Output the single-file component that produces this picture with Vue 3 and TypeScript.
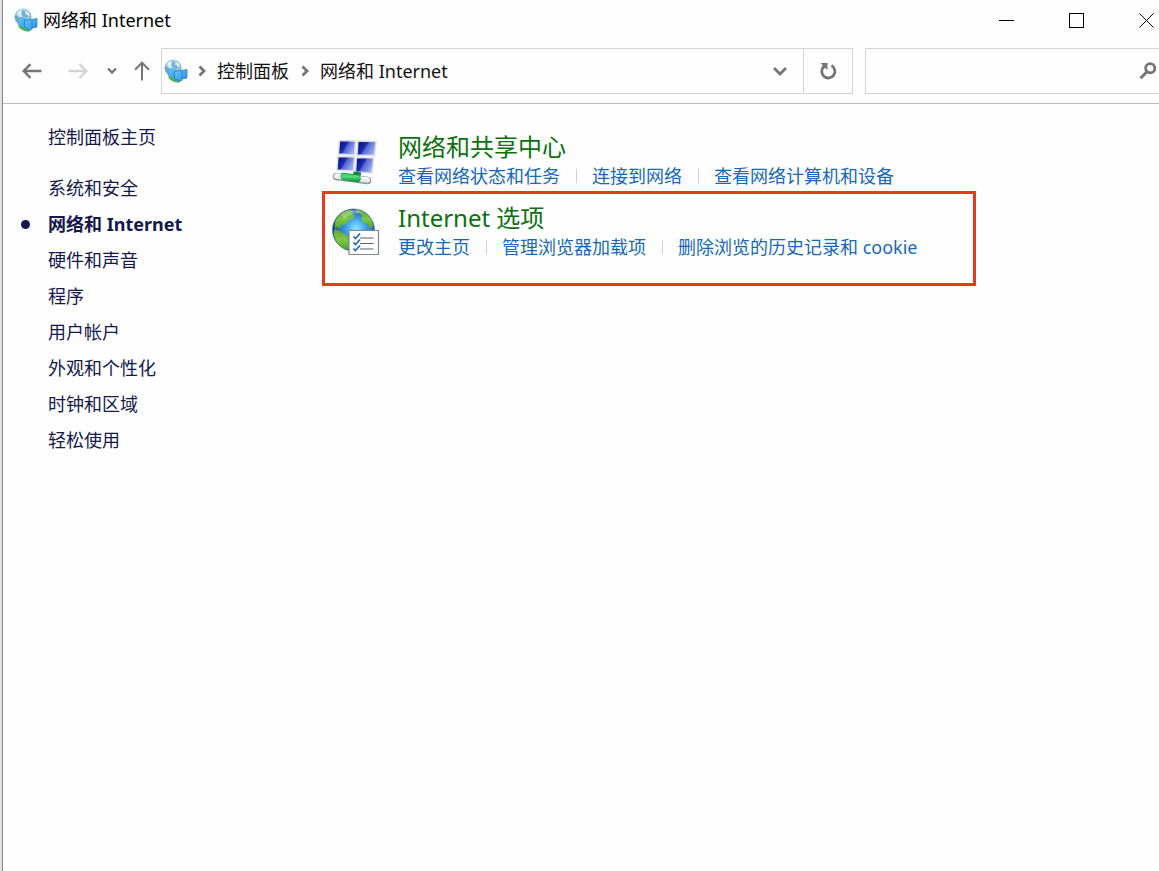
<script setup lang="ts">
import { ref } from 'vue'

interface Category {
  id: string
  title: string
  icon: 'sharing' | 'internet'
  tasks: string[]
  highlighted: boolean
}

const query = ref('')
const current = '网络和 Internet'
const crumbs: string[] = ['控制面板', current]
const sections: string[] = [
  '系统和安全',
  current,
  '硬件和声音',
  '程序',
  '用户帐户',
  '外观和个性化',
  '时钟和区域',
  '轻松使用',
]
const categories: Category[] = [
  {
    id: 'sharing',
    title: '网络和共享中心',
    icon: 'sharing',
    tasks: ['查看网络状态和任务', '连接到网络', '查看网络计算机和设备'],
    highlighted: false,
  },
  {
    id: 'internet',
    title: 'Internet 选项',
    icon: 'internet',
    tasks: ['更改主页', '管理浏览器加载项', '删除浏览的历史记录和 cookie'],
    highlighted: true,
  },
]
</script>

<template>
  <div class="desktop">
    <div class="window">
      <svg class="defs" width="0" height="0" aria-hidden="true">
        <defs>
          <radialGradient id="paleGlobe" cx="45%" cy="35%" r="65%">
            <stop offset="0" stop-color="#e6f5fa" />
            <stop offset="0.6" stop-color="#9ccbe0" />
            <stop offset="1" stop-color="#5d9dc0" />
          </radialGradient>
          <linearGradient id="paleScreen" x1="0" y1="0" x2="1" y2="1">
            <stop offset="0" stop-color="#6cc8f8" />
            <stop offset="1" stop-color="#1f8fe4" />
          </linearGradient>
          <symbol id="netIcon" viewBox="0 0 24 24">
            <circle cx="9" cy="9" r="8.500" fill="url(#paleGlobe)" />
            <path d="M8 2l3 1v3l3 1-1 3-4-1-2-3zM1 7l3 1 1 4-2 2C1 12 .500 9 1 7z" fill="#5ba6cb" opacity=".8" />
            <path d="M4 4l3-2 .500 3L5 8zM12 3l3 2 1 3-3-1z" fill="#f3fbfd" opacity=".8" />
            <path d="M4.500 17l9 3.500 3 .500-1 2.500c-4 .500-9-2-11-4.500z" fill="#4fb356" />
            <path d="M4.500 10l4-.500 6 3v8.500l-10-4z" fill="url(#paleScreen)" stroke="#3e97cf" stroke-width=".6" />
            <path d="M10.500 12.500l12.500-2v8.500l-5 1v1.500l-4 1v-2l-3.500-1z" fill="url(#paleScreen)" stroke="#2678b5" stroke-width=".7" />
            <path d="M18 11.500V20" stroke="#2678b5" stroke-width=".7" />
          </symbol>
        </defs>
      </svg>

      <header class="titlebar">
        <svg class="app-icon" aria-hidden="true"><use href="#netIcon" /></svg>
        <h1 class="title">{{ current }}</h1>
        <div class="captions">
          <button type="button" class="caption" aria-label="最小化">
            <svg viewBox="0 0 16 16" shape-rendering="crispEdges"><path d="M0 8.500h15" /></svg>
          </button>
          <button type="button" class="caption" aria-label="最大化">
            <svg viewBox="0 0 16 16" shape-rendering="crispEdges"><path d="M.5 1.500h14v14H.5z" /></svg>
          </button>
          <button type="button" class="caption" aria-label="关闭">
            <svg viewBox="0 0 16 16"><path d="M.5 1.500l14 14M14.500 1.500l-14 14" /></svg>
          </button>
        </div>
      </header>

      <div class="toolbar">
        <nav class="history" aria-label="导航">
          <button type="button" class="tool" aria-label="后退">
            <svg width="20" height="16" viewBox="0 0 20 16" class="glyph"><path d="M19.500 8H2M8.500 1.200L1.700 8l6.800 6.800" /></svg>
          </button>
          <button type="button" class="tool forward" aria-label="前进" disabled>
            <svg width="20" height="16" viewBox="0 0 20 16" class="glyph"><path d="M.5 8H18M11.500 1.200L18.300 8l-6.800 6.800" /></svg>
          </button>
          <button type="button" class="tool recent" aria-label="最近浏览的位置">
            <svg width="10" height="8" viewBox="0 0 10 8" class="glyph"><path d="M1 1.500l4 4 4-4" /></svg>
          </button>
          <button type="button" class="tool up" aria-label="向上">
            <svg width="16" height="20" viewBox="0 0 16 20" class="glyph thin"><path d="M8 19.500V2M1 8.700L8 1.700l7 7" /></svg>
          </button>
        </nav>

        <div class="address">
          <svg class="app-icon" aria-hidden="true"><use href="#netIcon" /></svg>
          <template v-for="crumb in crumbs" :key="crumb">
            <svg class="sep glyph heavy" width="8" height="12" viewBox="0 0 8 12" aria-hidden="true"><path d="M1.500 1.500L6 6l-4.500 4.500" /></svg>
            <a href="#" class="crumb">{{ crumb }}</a>
          </template>
          <button type="button" class="tool expand" aria-label="展开">
            <svg width="14" height="10" viewBox="0 0 14 10" class="glyph heavy"><path d="M1 2l6 6 6-6" /></svg>
          </button>
          <button type="button" class="tool refresh" aria-label="刷新">
            <svg width="18" height="18" viewBox="0 0 18 18">
              <path d="M12.500 3.600A6.600 6.600 0 1 1 4.800 4.600" fill="none" stroke="#757575" stroke-width="2.800" />
              <path d="M1.500 1H8.500V8L6.200 5.700 4.500 7.200 2.800 5.500 4 3.500z" fill="#757575" />
            </svg>
          </button>
        </div>

        <div class="search">
          <input v-model="query" type="text" aria-label="搜索控制面板" />
          <button type="button" class="tool" aria-label="搜索">
            <svg width="18" height="18" viewBox="0 0 18 18">
              <circle cx="11.200" cy="6.300" r="4.600" fill="none" stroke="#757575" stroke-width="2.800" />
              <path d="M8 9.800L1.500 16.300" stroke="#757575" stroke-width="3" />
            </svg>
          </button>
        </div>
      </div>

      <div class="body">
        <aside class="sidebar">
          <a href="#" class="side-link">控制面板主页</a>
          <ul class="sections">
            <li v-for="name in sections" :key="name" :class="{ active: name === current }">
              <a href="#" class="side-link">{{ name }}</a>
            </li>
          </ul>
        </aside>

        <main class="content">
          <section
            v-for="cat in categories"
            :key="cat.id"
            class="category"
            :class="{ highlighted: cat.highlighted }"
          >
            <svg v-if="cat.icon === 'sharing'" class="cat-icon" viewBox="0 0 48 48" aria-hidden="true">
              <defs>
                <linearGradient id="screen" x1="0" y1="0.200" x2="1" y2="0.700">
                  <stop offset="0" stop-color="#0a1272" />
                  <stop offset="0.4" stop-color="#1a2cb4" />
                  <stop offset="0.5" stop-color="#5468d4" />
                  <stop offset="1" stop-color="#a9b8f2" />
                </linearGradient>
                <linearGradient id="joint" x1="0" y1="0" x2="0" y2="1">
                  <stop offset="0" stop-color="#2fc45c" />
                  <stop offset="0.4" stop-color="#4fe07a" />
                  <stop offset="1" stop-color="#078a35" />
                </linearGradient>
              </defs>
              <g fill="url(#screen)" stroke="#d9dce6" stroke-width="1.400">
                <path d="M7.500 3.500l16 .500-1 14-16-1z" />
                <path d="M26 4l18 .500-1.500 14-17.500-.500z" />
                <path d="M6 19.500l16.500 .500-1 14-16.500-1z" />
                <path d="M24.500 20.500l17 .500-1.500 15-16.500-1z" />
              </g>
              <path d="M4.500 39.500l31 4" stroke="#8a949a" stroke-width="7.500" stroke-linecap="round" />
              <path d="M4.500 39l31 4" stroke="#e6eaec" stroke-width="5.500" stroke-linecap="round" />
              <path d="M4.500 37.500l31 4" stroke="#fff" stroke-width="1.500" stroke-linecap="round" />
              <path d="M22 34.500l7 1v3l-9 1z" fill="#10843a" />
              <path d="M10.500 36l16 2c2.500 1 2.500 6 0 7l-16-2.500c-2-1-2-5.500 0-6.500z" fill="url(#joint)" stroke="#09843a" stroke-width=".6" />
            </svg>

            <svg v-else class="cat-icon" viewBox="0 0 48 48" aria-hidden="true">
              <defs>
                <radialGradient id="ocean" cx="56%" cy="46%" r="60%">
                  <stop offset="0" stop-color="#8fe4ff" />
                  <stop offset="0.4" stop-color="#3f9fe6" />
                  <stop offset="0.75" stop-color="#2360b8" />
                  <stop offset="1" stop-color="#14306e" />
                </radialGradient>
                <linearGradient id="land" x1="0" y1="0" x2="0" y2="1">
                  <stop offset="0" stop-color="#5f9f3c" />
                  <stop offset="0.5" stop-color="#7cc843" />
                  <stop offset="1" stop-color="#4da32f" />
                </linearGradient>
              </defs>
              <circle cx="21.500" cy="22" r="21" fill="url(#ocean)" stroke="#2a5684" stroke-width=".6" />
              <g fill="url(#land)">
                <path d="M3 14C6 7 11 3 17 1.500l4 1.500-1 3 3 1-2 4-4 1-3 4-4 1-2 4-3-2-2 2z" />
                <path d="M24 1.500c7 1 13 5 16 11l1 6-3 2-3-5-4-1-2-5 2-1-3-3-4-1z" />
                <path d="M3 21l5 2 6 4 3 3v8l-1 4C8 40 2 33 1.500 24z" />
              </g>
              <path d="M9 6.500c5-5 15-6 23-2-8 0-15 2-20 7z" fill="#fff" opacity=".28" />
              <path d="M17 22.500h29.500v24H17z" fill="#fcfcfc" stroke="#85888d" stroke-width="1.200" />
              <g fill="none" stroke="#1f6ea8" stroke-width="1.700">
                <path d="M21.500 28.500l2 2 4.500-5M21.500 34.500l2 2 4.500-5M21.500 40.500l2 2 4.500-5" />
              </g>
              <path d="M28 30h13.500M28 35.500h13.500M28 41h13.500" stroke="#5b6570" stroke-width="1.200" />
            </svg>

            <div class="details">
              <h2><a href="#">{{ cat.title }}</a></h2>
              <ul class="tasks">
                <li v-for="task in cat.tasks" :key="task"><a href="#">{{ task }}</a></li>
              </ul>
            </div>
          </section>
        </main>
      </div>
    </div>
  </div>
</template>

<style>
body {
  margin: 0;
  background: #fff;
}
</style>

<style scoped>
.desktop {
  box-sizing: border-box;
  min-height: 100vh;
  display: flex;
  padding-left: 2px;
  background: #e2e2e4;
  overflow: hidden;
  font-family: "Noto Sans", "Noto Sans CJK SC", sans-serif;
  font-size: 18px;
}
.window {
  flex: 1;
  min-width: 0;
  border-left: 1px solid #85858a;
  background: #fefefe;
}
.defs {
  display: block;
}
a {
  color: inherit;
  text-decoration: none;
}
a:hover {
  text-decoration: underline;
}
button {
  display: flex;
  align-items: center;
  justify-content: center;
  padding: 0;
  border: 0;
  background: none;
}
ul {
  margin: 0;
  padding: 0;
  list-style: none;
}
.titlebar {
  display: flex;
  align-items: center;
  height: 40px;
  padding-left: 11px;
}
.app-icon {
  flex: none;
  width: 24px;
  height: 24px;
}
.title {
  flex: 1;
  margin: 0 0 0 5px;
  font-size: 18px;
  font-weight: 400;
  line-height: 40px;
  color: #000;
}
.captions {
  display: flex;
  align-self: stretch;
  margin-right: -23px;
}
.caption {
  width: 70px;
}
.caption svg {
  width: 16px;
  height: 16px;
  fill: none;
  stroke: #000;
  stroke-width: 1;
}
.toolbar {
  display: flex;
  align-items: center;
  height: 64px;
  box-sizing: border-box;
  padding: 0 0 1px 19px;
  border-bottom: 1px solid #b9bbbd;
}
.history {
  display: flex;
  align-items: center;
  width: 139px;
}
.forward {
  margin-left: 26px;
  opacity: 0.3;
}
.recent {
  margin-left: 19px;
}
.up {
  margin-left: 17px;
}
.glyph {
  fill: none;
  stroke: #757575;
  stroke-width: 2.4;
}
.thin {
  stroke-width: 2;
}
.heavy {
  stroke-width: 2.8;
}
.address,
.search {
  box-sizing: border-box;
  display: flex;
  align-items: center;
  height: 46px;
  border: 1px solid #d2d5d6;
}
.address {
  flex: 1;
  padding-left: 2px;
}
.sep {
  flex: none;
  margin: 0 11px 0 10px;
}
.crumb {
  line-height: 44px;
  white-space: nowrap;
  color: #111;
}
.crumb + .sep {
  margin-left: 12px;
}
.expand {
  width: 46px;
  height: 100%;
  margin-left: auto;
}
.refresh {
  width: 49px;
  height: 100%;
  border-left: 1px solid #d2d5d6;
}
.search {
  flex: none;
  width: 294px;
  margin-left: 12px;
  border-right: 0;
}
.search input {
  flex: 1;
  min-width: 0;
  height: 100%;
  box-sizing: border-box;
  padding: 0 10px;
  border: 0;
  outline: 0;
  background: none;
  font: inherit;
}
.search .tool {
  width: 22px;
  height: 100%;
}
.body {
  display: flex;
}
.sidebar {
  flex: none;
  box-sizing: border-box;
  width: 319px;
  padding: 15px 0 0 45px;
  color: #14184d;
}
.side-link {
  display: block;
  line-height: 36px;
}
.sections {
  margin-top: 15px;
}
.sections li {
  position: relative;
}
.active {
  font-weight: 700;
}
.active::before {
  content: "";
  position: absolute;
  left: -27px;
  top: 14px;
  width: 9px;
  height: 9px;
  border-radius: 50%;
  background: #14184d;
}
.content {
  flex: 1;
  min-width: 0;
  padding-top: 27px;
}
.category {
  box-sizing: border-box;
  display: flex;
  gap: 18px;
  width: fit-content;
  padding-left: 10px;
}
.highlighted {
  margin-top: 2px;
  padding: 8px 55px 23px 7px;
  border: 3px solid #e23c1c;
}
.cat-icon {
  flex: none;
  width: 48px;
  height: 48px;
  margin-top: 6px;
}
h2 {
  margin: 0;
  font-size: 24px;
  font-weight: 400;
  line-height: 32px;
  color: #0b710f;
}
.tasks {
  display: flex;
  flex-wrap: wrap;
  line-height: 26px;
  color: #1668b8;
}
.tasks li {
  display: flex;
  align-items: center;
}
.tasks li + li::before {
  content: "";
  width: 1px;
  height: 14px;
  margin: 0 15px 0 16px;
  background: #c9d0d8;
}
</style>
